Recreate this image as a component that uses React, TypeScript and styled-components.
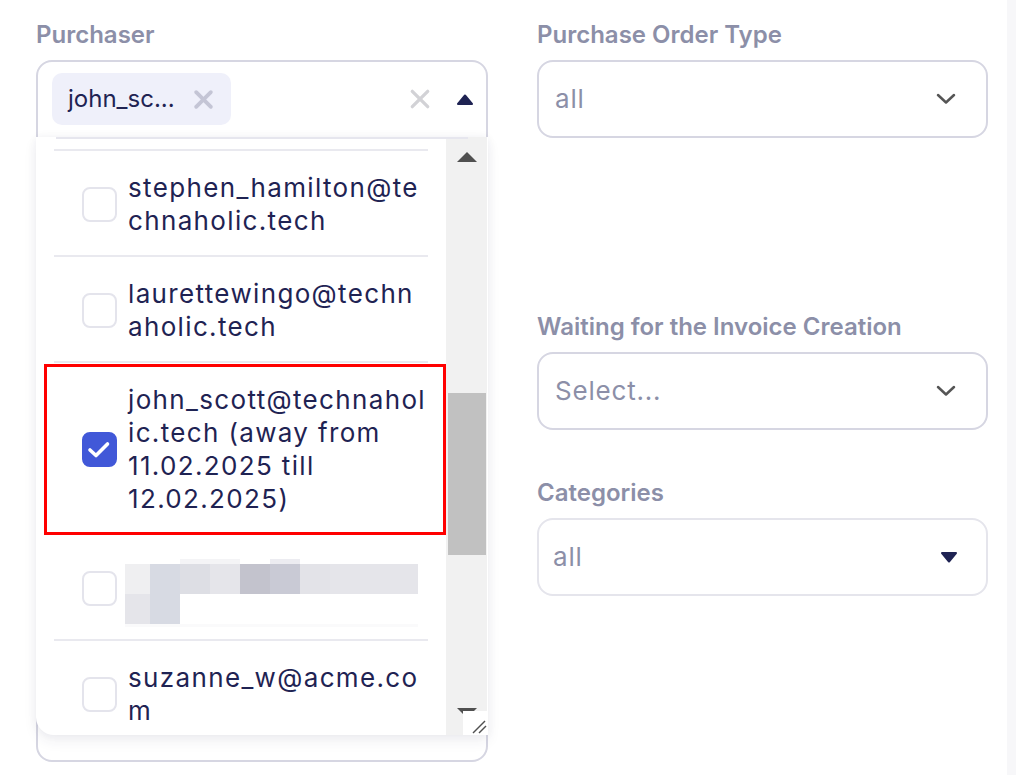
import React from "react";
import styled, { createGlobalStyle } from "styled-components";

const GlobalStyle = createGlobalStyle`
  html, body { margin: 0; padding: 0; background: #ffffff; overflow: hidden; }
  body { font-family: Inter, "Noto Sans", sans-serif; }
  * { box-sizing: border-box; }
`;

const NAVY = "#1f2353";
const MUTED = "#8c8fa8";

const Page = styled.div`
  display: flex;
  width: 1016px;
  height: 775px;
  background: #ffffff;
`;

const Main = styled.div`
  flex: 1;
  display: grid;
  grid-template-columns: 452px 451px;
  column-gap: 49px;
  align-items: start;
  padding: 20px 0 0 36px;
`;

const SideStrip = styled.div`
  width: 9px;
  background: #f7f7f9;
`;

const Column = styled.div`
  display: flex;
  flex-direction: column;
`;

const Field = styled.div<{ $gap?: number }>`
  display: flex;
  flex-direction: column;
  margin-top: ${(p) => p.$gap ?? 0}px;
`;

const Label = styled.div`
  font: 600 24px/30px Inter, sans-serif;
  color: ${MUTED};
  margin-bottom: 10px;
  white-space: nowrap;
`;

const SelectBox = styled.div<{ $light?: boolean }>`
  height: 78px;
  border: 2px solid ${(p) => (p.$light ? "#e5e5ec" : "#d6d6e2")};
  border-radius: 16px;
  display: flex;
  align-items: center;
  justify-content: space-between;
  padding: ${(p) => (p.$light ? "0 28px 0 14px" : "0 30px 0 16px")};
  background: #fff;
`;

const Value = styled.span`
  font: 400 26px/32px Inter, sans-serif;
  letter-spacing: 0.8px;
  color: ${MUTED};
`;

const MultiControl = styled.div`
  position: relative;
  height: 702px;
  border: 2px solid #d6d6e2;
  border-radius: 16px;
  background: #fff;
`;

const ControlHeader = styled.div`
  height: 74px;
  display: flex;
  align-items: center;
  padding: 0 12px 0 14px;
`;

const Chip = styled.div`
  height: 52px;
  display: flex;
  align-items: center;
  gap: 18px;
  padding: 0 17px 0 16px;
  background: #eff0fa;
  border-radius: 10px;
`;

const ChipText = styled.span`
  font: 400 24px/30px Inter, sans-serif;
  color: ${NAVY};
  white-space: nowrap;
`;

const Spacer = styled.div`
  flex: 1;
`;

const IconSlot = styled.div<{ $w: number }>`
  width: ${(p) => p.$w}px;
  display: flex;
  align-items: center;
  justify-content: center;
`;

const Menu = styled.div`
  position: absolute;
  left: -2px;
  top: 75px;
  width: 452px;
  height: 598px;
  display: flex;
  background: #fff;
  border-bottom-left-radius: 18px;
  box-shadow: 0 6px 14px rgba(40, 40, 80, 0.07), 0 0 10px rgba(40, 40, 80, 0.05);
  z-index: 2;

  &::before {
    content: "";
    position: absolute;
    top: 0;
    left: 20px;
    right: 20px;
    height: 2px;
    background: #e6e6ee;
    z-index: 3;
  }
`;

const List = styled.div`
  flex: 1;
  overflow: hidden;
  padding: 12px 18px 0 18px;
  border-bottom-left-radius: 18px;
`;

const Item = styled.div<{ $marked?: boolean }>`
  position: relative;
  display: flex;
  align-items: center;
  gap: 11px;
  padding: 20px 0 18px 28px;
  border-top: 2px solid #e9e9ef;

  ${(p) =>
    p.$marked
      ? `
    &::after {
      content: "";
      position: absolute;
      top: 1px;
      bottom: -2px;
      left: -10px;
      right: -18px;
      border: 3px solid #ff0000;
      z-index: 1;
    }
  `
      : ""}
`;

const Box = styled.div<{ $checked?: boolean }>`
  flex: none;
  width: 35px;
  height: 35px;
  border-radius: 8px;
  border: 2px solid ${(p) => (p.$checked ? "#4158d8" : "#e4e4ec")};
  background: ${(p) => (p.$checked ? "#4158d8" : "#fff")};
  display: flex;
  align-items: center;
  justify-content: center;
`;

const ItemText = styled.div`
  font: 400 26px/33px Inter, sans-serif;
  letter-spacing: 1.35px;
  color: ${NAVY};
  white-space: nowrap;
`;

const Line = styled.span`
  display: block;
`;

const Blur = styled.svg`
  display: block;
  margin-left: -3px;
  overflow: visible;
`;

const ScrollBar = styled.div`
  position: relative;
  width: 42px;
  display: flex;
  flex-direction: column;
  background: #f1f1f1;
  border-right: 1px solid #fff;
`;

const ArrowButton = styled.div<{ $pad: number }>`
  height: 40px;
  display: flex;
  justify-content: center;
  align-items: flex-start;
  padding-top: ${(p) => p.$pad}px;
`;

const Track = styled.div`
  flex: 1;
  padding: 216px 1px 0 2px;
`;

const Thumb = styled.div`
  height: 162px;
  background: #c1c1c1;
`;

const Resizer = styled.div`
  position: absolute;
  right: -1px;
  bottom: 0;
  width: 25px;
  height: 24px;
  background: #fff;
`;

const Chevron = () => (
  <svg width="20" height="12" viewBox="0 0 20 12">
    <polyline points="2,2 10,9.5 18,2" fill="none" stroke="#555" strokeWidth="2.5" strokeLinecap="round" strokeLinejoin="round" />
  </svg>
);

const SolidDown = () => (
  <svg width="18" height="13" viewBox="0 0 18 13">
    <path d="M2 2 L16 2 L9 10.5 Z" fill={NAVY} stroke={NAVY} strokeWidth="2" strokeLinejoin="round" />
  </svg>
);

const SolidUp = () => (
  <svg width="18" height="13" viewBox="0 0 18 13">
    <path d="M2 11 L9 2.5 L16 11 Z" fill={NAVY} stroke={NAVY} strokeWidth="2" strokeLinejoin="round" />
  </svg>
);

const Cross = ({ size, color, stroke }: { size: number; color: string; stroke: number }) => (
  <svg width={size} height={size} viewBox="0 0 20 20">
    <line x1="3" y1="3" x2="17" y2="17" stroke={color} strokeWidth={stroke} strokeLinecap="round" />
    <line x1="17" y1="3" x2="3" y2="17" stroke={color} strokeWidth={stroke} strokeLinecap="round" />
  </svg>
);

const Check = () => (
  <svg width="35" height="35" viewBox="0 0 35 35" style={{ position: "absolute" }}>
    <polyline points="8,18 14,23.5 25.5,12" fill="none" stroke="#fff" strokeWidth="3.6" strokeLinecap="round" strokeLinejoin="round" />
  </svg>
);

const ScrollArrow = ({ down }: { down?: boolean }) => (
  <svg width="20" height="10" viewBox="0 0 20 10">
    {down ? <path d="M0 0 L20 0 L10 10 Z" fill="#505050" /> : <path d="M0 10 L10 0 L20 10 Z" fill="#505050" />}
  </svg>
);

const Grip = () => (
  <svg width="25" height="24" viewBox="0 0 25 24">
    <line x1="10" y1="22" x2="22" y2="10" stroke="#505050" strokeWidth="1.4" />
    <line x1="16" y1="22" x2="23" y2="15" stroke="#505050" strokeWidth="1.4" />
  </svg>
);

const blurBlocks: [number, number, number, number, string][] = [
  [55, 4, 60, 5, "#f4f4f6"],
  [145, 4, 30, 5, "#ececf1"],
  [0, 9, 25, 30, "#efeff1"],
  [25, 9, 30, 30, "#d7dae3"],
  [55, 9, 30, 30, "#dddee4"],
  [85, 9, 30, 30, "#e5e5ea"],
  [115, 9, 30, 30, "#c3c3cd"],
  [145, 9, 30, 30, "#c9cad5"],
  [175, 9, 30, 30, "#e3e3e8"],
  [205, 9, 88, 30, "#e5e5ea"],
  [0, 39, 25, 30, "#e5e5ea"],
  [25, 39, 30, 30, "#d7dae3"],
  [0, 69, 293, 3, "#fafafb"],
];

const Pixelated = () => (
  <Blur width="293" height="66" viewBox="0 0 293 66">
    {blurBlocks.map(([x, y, w, h, c], i) => (
      <rect key={i} x={x} y={y} width={w} height={h} fill={c} />
    ))}
  </Blur>
);

type Option = { lines?: string[]; checked?: boolean; marked?: boolean; hidden?: boolean };

const options: Option[] = [
  { lines: ["stephen_hamilton@te", "chnaholic.tech"] },
  { lines: ["laurettewingo@techn", "aholic.tech"] },
  {
    lines: ["john_scott@technahol", "ic.tech (away from", "11.02.2025 till", "12.02.2025)"],
    checked: true,
    marked: true,
  },
  { hidden: true },
  { lines: ["suzanne_w@acme.co", "m"] },
];

export default function App() {
  return (
    <>
      <GlobalStyle />
      <Page>
        <Main>
          <Column>
            <Field>
              <Label>Purchaser</Label>
              <MultiControl>
                <ControlHeader>
                  <Chip>
                    <ChipText>john_sc...</ChipText>
                    <Cross size={21} color="#c4c5d5" stroke={3.6} />
                  </Chip>
                  <Spacer />
                  <IconSlot $w={22}>
                    <Cross size={22} color="#d2d2d6" stroke={3} />
                  </IconSlot>
                  <IconSlot $w={25} />
                  <IconSlot $w={18}>
                    <SolidUp />
                  </IconSlot>
                </ControlHeader>
                <Menu>
                  <List>
                    {options.map((o, i) => (
                      <Item key={i} $marked={o.marked}>
                        <Box $checked={o.checked}>{o.checked && <Check />}</Box>
                        {o.hidden ? (
                          <Pixelated />
                        ) : (
                          <ItemText>
                            {o.lines!.map((l) => (
                              <Line key={l}>{l}</Line>
                            ))}
                          </ItemText>
                        )}
                      </Item>
                    ))}
                  </List>
                  <ScrollBar>
                    <ArrowButton $pad={15}>
                      <ScrollArrow />
                    </ArrowButton>
                    <Track>
                      <Thumb />
                    </Track>
                    <ArrowButton $pad={13}>
                      <ScrollArrow down />
                    </ArrowButton>
                    <Resizer>
                      <Grip />
                    </Resizer>
                  </ScrollBar>
                </Menu>
              </MultiControl>
            </Field>
          </Column>
          <Column>
            <Field>
              <Label>Purchase Order Type</Label>
              <SelectBox>
                <Value>all</Value>
                <Chevron />
              </SelectBox>
            </Field>
            <Field $gap={174}>
              <Label>Waiting for the Invoice Creation</Label>
              <SelectBox>
                <Value>Select...</Value>
                <Chevron />
              </SelectBox>
            </Field>
            <Field $gap={48}>
              <Label>Categories</Label>
              <SelectBox $light>
                <Value>all</Value>
                <SolidDown />
              </SelectBox>
            </Field>
          </Column>
        </Main>
        <SideStrip />
      </Page>
    </>
  );
}
